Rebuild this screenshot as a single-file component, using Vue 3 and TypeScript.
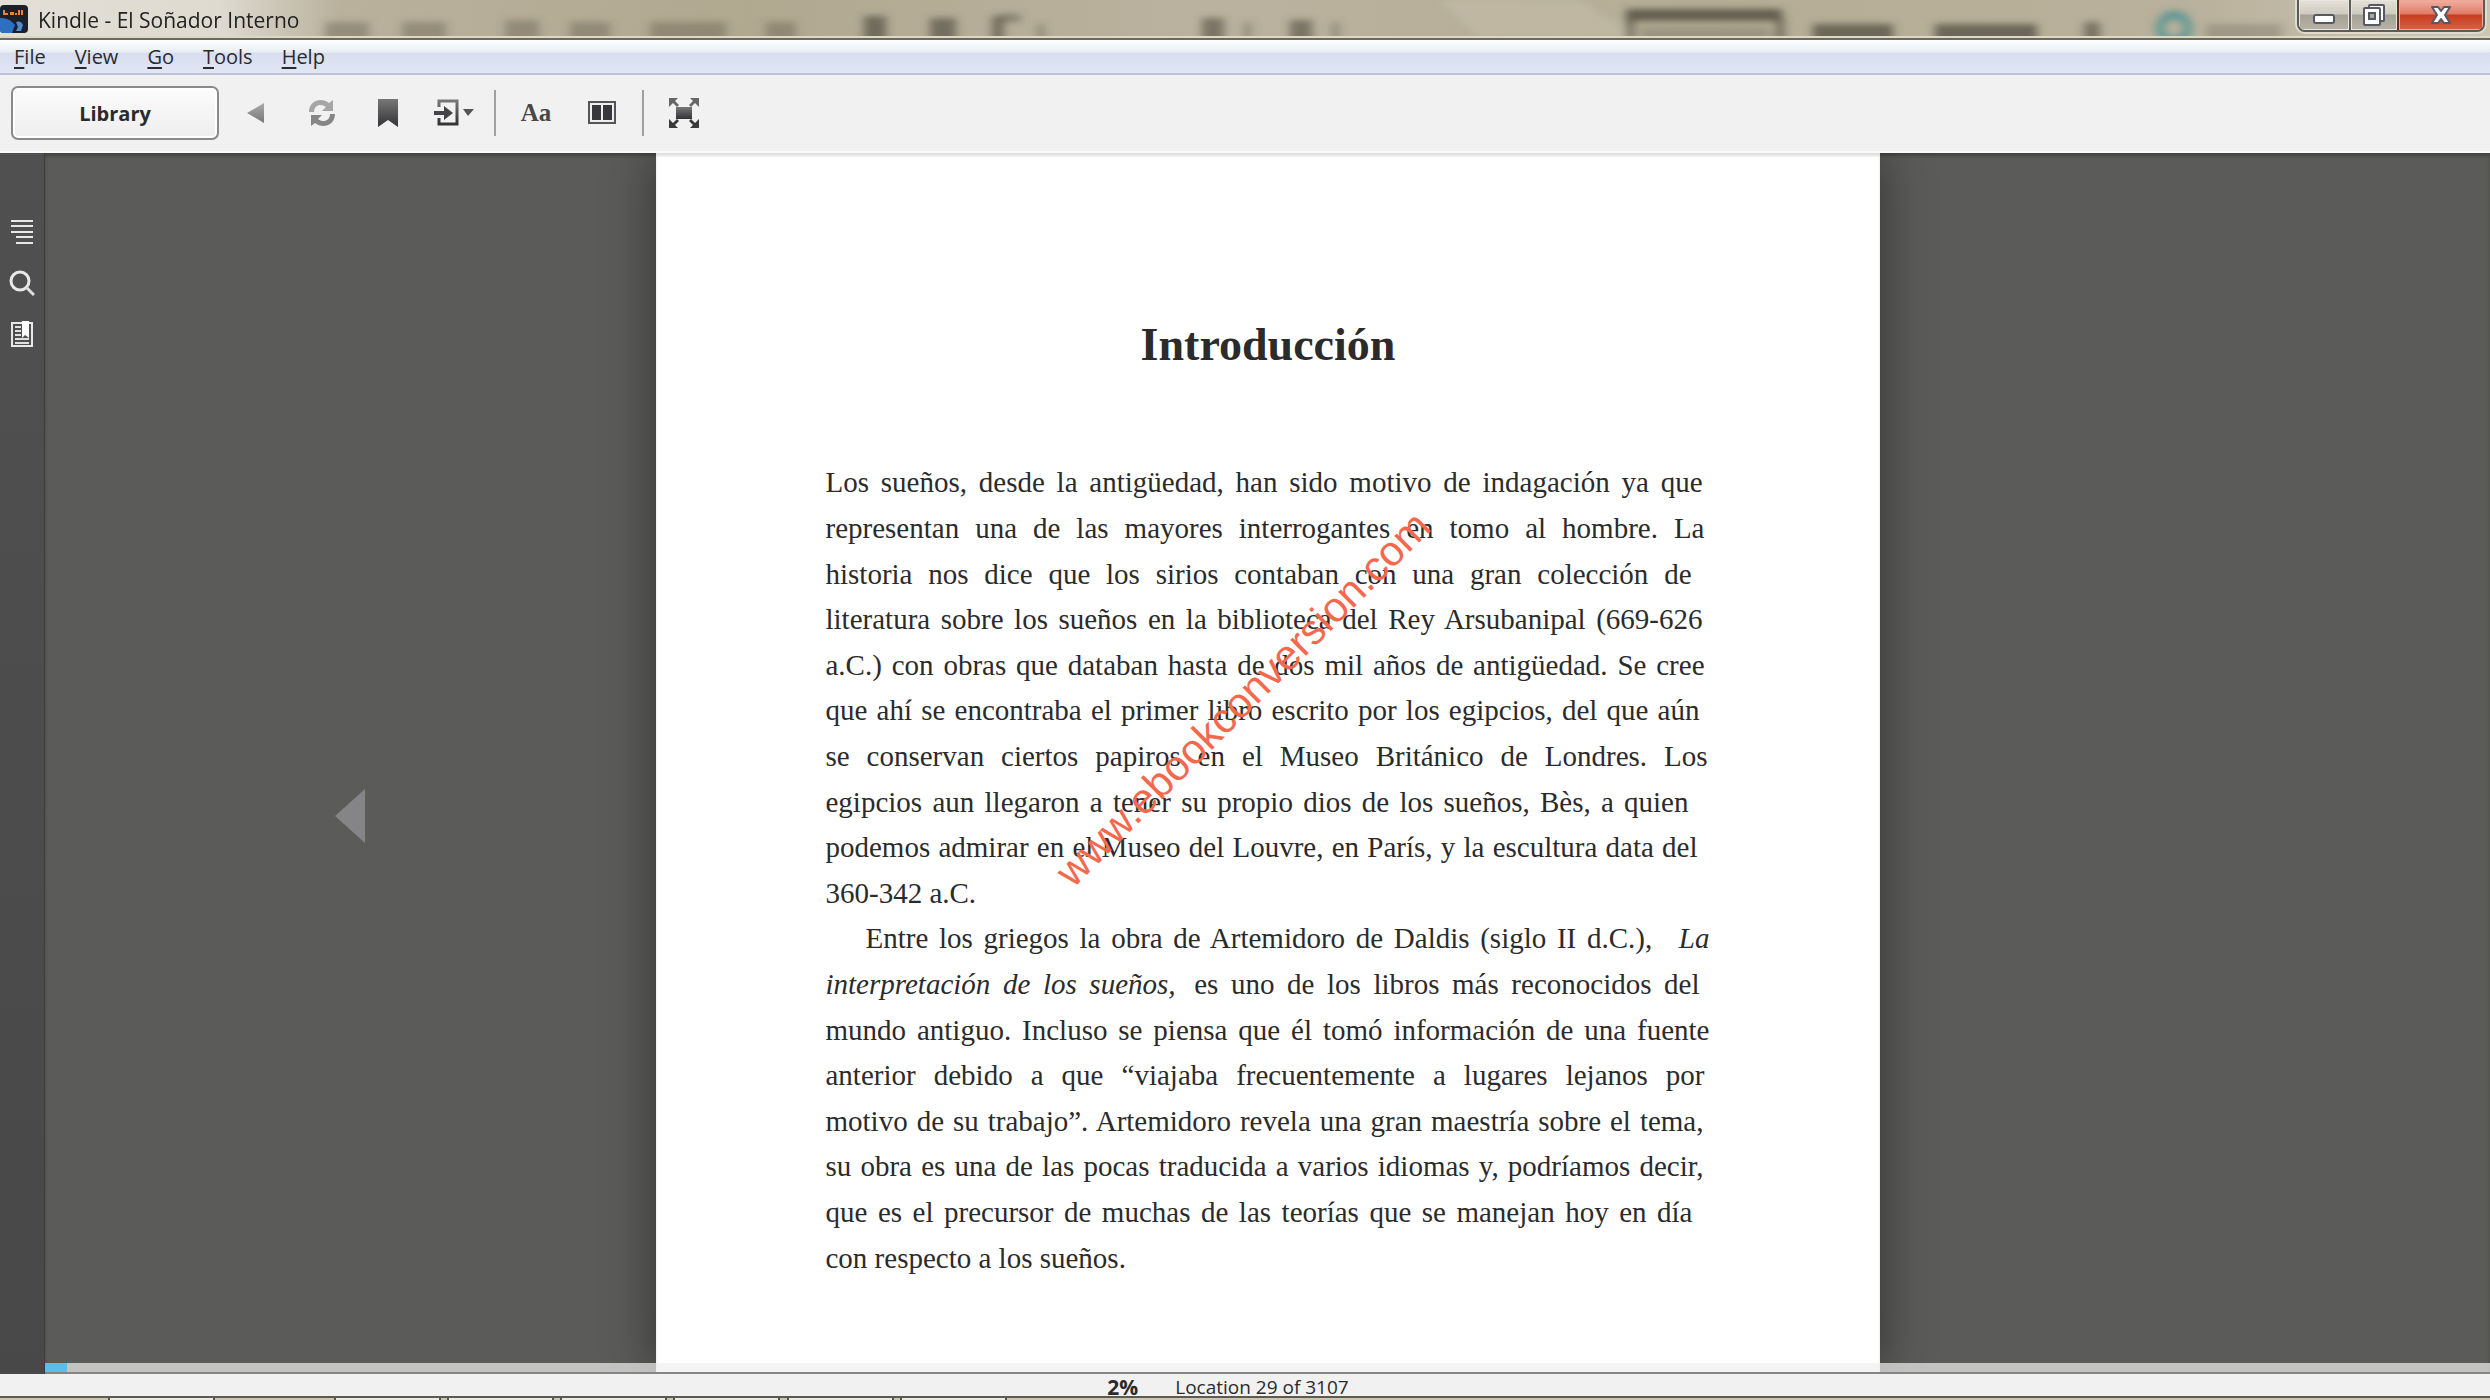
<script setup lang="ts">
interface Line {
  text: string
  slack: number
  before?: string
  italic?: string
}

const menus: string[] = ['File', 'View', 'Go', 'Tools', 'Help']

const first: Line[] = [
  { text: 'Los sueños, desde la antigüedad, han sido motivo de indagación ya que', slack: 8 },
  { text: 'representan una de las mayores interrogantes en tomo al hombre. La', slack: 6 },
  { text: 'historia nos dice que los sirios contaban con una gran colección de', slack: 19 },
  { text: 'literatura sobre los sueños en la biblioteca del Rey Arsubanipal (669-626', slack: 8 },
  { text: 'a.C.) con obras que databan hasta de dos mil años de antigüedad. Se cree', slack: 6 },
  { text: 'que ahí se encontraba el primer libro escrito por los egipcios, del que aún', slack: 11 },
  { text: 'se conservan ciertos papiros en el Museo Británico de Londres. Los', slack: 3 },
  { text: 'egipcios aun llegaron a tener su propio dios de los sueños, Bès, a quien', slack: 22 },
  { text: 'podemos admirar en el Museo del Louvre, en París, y la escultura data del', slack: 13 },
  { text: '360-342 a.C.', slack: 0 },
]

const second: Line[] = [
  { before: 'Entre los griegos la obra de Artemidoro de Daldis (siglo II d.C.), ', italic: 'La', text: '', slack: 1 },
  { italic: 'interpretación de los sueños,', text: ' es uno de los libros más reconocidos del', slack: 11 },
  { text: 'mundo antiguo. Incluso se piensa que él tomó información de una fuente', slack: 1 },
  { text: 'anterior debido a que “viajaba frecuentemente a lugares lejanos por', slack: 6 },
  { text: 'motivo de su trabajo”. Artemidoro revela una gran maestría sobre el tema,', slack: 7 },
  { text: 'su obra es una de las pocas traducida a varios idiomas y, podríamos decir,', slack: 7 },
  { text: 'que es el precursor de muchas de las teorías que se manejan hoy en día', slack: 18 },
  { text: 'con respecto a los sueños.', slack: 0 },
]

const smudges: number[][] = [
  [325, 22, 44, 24, 0.4], [402, 22, 44, 24, 0.4], [505, 20, 34, 24, 0.4], [570, 22, 40, 24, 0.4],
  [650, 22, 76, 24, 0.4], [766, 22, 30, 24, 0.4], [864, 16, 22, 30, 0.8], [930, 18, 26, 28, 0.75],
  [992, 16, 12, 30, 0.75], [1000, 14, 20, 8, 0.55], [1038, 24, 6, 20, 0.5], [1202, 18, 22, 28, 0.7],
  [1244, 22, 7, 22, 0.45], [1290, 20, 22, 26, 0.7], [1332, 22, 7, 22, 0.45], [1626, 9, 156, 12, 0.95],
  [1626, 18, 8, 28, 0.8], [1776, 18, 8, 28, 0.8], [1640, 27, 130, 18, 0.3], [1813, 24, 80, 22, 0.85],
  [1935, 24, 102, 22, 0.85], [2084, 22, 16, 24, 0.7], [2206, 24, 76, 20, 0.3],
]

const tasks: number[] = [109, 335, 448, 561, 674, 788, 901]
const read = 2
</script>

<template>
  <div class="window">
    <header class="titlebar">
      <svg class="glass" aria-hidden="true">
        <defs>
          <filter id="soft" x="-5%" y="-50%" width="110%" height="200%"><feGaussianBlur stdDeviation="5 3" /></filter>
        </defs>
        <g filter="url(#soft)">
          <path d="M1440 0h140l60 38h-160z" fill="#cbc3b0" opacity=".4" />
          <rect v-for="(s, i) in smudges" :key="i" :x="s[0]" :y="s[1]" :width="s[2]" :height="s[3]" :opacity="s[4]" fill="#5f5a4c" />
          <ellipse cx="2174" cy="28" rx="14" ry="13" fill="none" stroke="#629994" stroke-width="9" />
        </g>
      </svg>
      <svg class="app-icon" viewBox="0 0 28 28" aria-hidden="true">
        <rect width="28" height="28" rx="4" fill="#1d2028" />
        <path d="M0 13q8 0 12 4l3 3-3 8H3q-3 0-3-3z" fill="#2f6fc0" />
        <path d="M16 17q5-2 7 3l-2 6h-5l2-4z" fill="#4b8cd4" />
        <path d="M4 5v5M4 9h4M11 7v3M13 7v3M16 8v2M19 5v5M22 5v5" stroke="#e9862d" stroke-width="2" />
      </svg>
      <h1 class="caption">Kindle - El Soñador Interno</h1>
      <div class="controls">
        <button type="button" class="ctl" aria-label="Minimize">
          <svg width="22" height="28" viewBox="0 0 22 28"><rect x="1" y="15" width="20" height="8" rx="2" fill="#fff" stroke="#565866" stroke-width="2" /></svg>
        </button>
        <button type="button" class="ctl mid" aria-label="Restore">
          <svg width="24" height="28" viewBox="0 0 24 28"><g fill="#fff" stroke="#565866" stroke-width="2"><rect x="7" y="5" width="15" height="16" rx="1" /><rect x="2" y="8" width="16" height="17" rx="1" /><rect x="7" y="13" width="6" height="6" fill="#aaa698" /></g></svg>
        </button>
        <button type="button" class="ctl close" aria-label="Close">
          <svg width="22" height="28" viewBox="0 0 22 28"><path d="M2 7h6l3 4 3-4h6l-5 8 5 8h-6l-3-4-3 4H2l5-8z" fill="#fff" stroke="#565866" stroke-width="2" stroke-linejoin="round" /></svg>
        </button>
      </div>
    </header>

    <nav class="menubar">
      <button v-for="m in menus" :key="m" type="button"><u>{{ m[0] }}</u>{{ m.slice(1) }}</button>
    </nav>

    <div class="toolbar">
      <button type="button" class="library">Library</button>
      <svg width="0" height="0" class="defs" aria-hidden="true">
        <linearGradient id="ink" x1="0" y1="0" x2="0" y2="1"><stop offset="0" stop-color="#777" /><stop offset="1" stop-color="#333336" /></linearGradient>
        <linearGradient id="grey" x1="0" y1="0" x2="0" y2="1"><stop offset="0" stop-color="#aaa" /><stop offset="1" stop-color="#777" /></linearGradient>
      </svg>
      <button type="button" class="tool" aria-label="Back">
        <svg width="18" height="20" viewBox="0 0 18 20"><path d="M0 10 17 0v20z" fill="url(#grey)" /></svg>
      </button>
      <button type="button" class="tool" aria-label="Sync">
        <svg width="28" height="28" viewBox="0 0 28 28"><path d="M1 13C1 1 14-2 21 4l4-3v11H14l4-4C13 4 6 6 6 13z" fill="#a6a6a6" /><path d="M27 15C27 27 14 30 7 24l-4 3V16h11l-4 4c5 4 12 2 12-5z" fill="#868686" /></svg>
      </button>
      <button type="button" class="tool" aria-label="Bookmark">
        <svg width="22" height="28" viewBox="0 0 22 28"><path d="M1 0h20v28l-10-7-10 7z" fill="url(#ink)" /></svg>
      </button>
      <button type="button" class="tool" aria-label="Go to">
        <svg width="40" height="28" viewBox="0 0 40 28"><path d="M5 8V2h18v23H5v-6" fill="none" stroke="url(#ink)" stroke-width="3" /><path d="M0 12h10V7l9 7-9 7v-5H0z" fill="#454548" /><path d="M29 10h11l-6 7z" fill="#555" /></svg>
      </button>
      <i class="rule"></i>
      <button type="button" class="tool aa" aria-label="Display options">Aa</button>
      <button type="button" class="tool" aria-label="Columns">
        <svg width="28" height="24" viewBox="0 0 28 24"><rect x="1" y="1" width="26" height="21" fill="#eee" stroke="#555" stroke-width="2" /><path d="M4 4h9v15H4zM15 4h9v15h-9z" fill="#38383b" /></svg>
      </button>
      <i class="rule"></i>
      <button type="button" class="tool" aria-label="Full screen">
        <svg width="30" height="30" viewBox="0 0 30 30"><rect x="7" y="9" width="16" height="12" fill="url(#ink)" /><g fill="#666"><path d="M0 0h9L6 3l4 4-2 2-4-4-4 4z" /><path d="M30 0h-9l3 3-4 4 2 2 4-4 4 4z" /></g><g fill="#3a3a3c"><path d="M0 30h9l-3-3 4-4-2-2-4 4-4-4z" /><path d="M30 30h-9l3-3-4-4 2-2 4 4 4-4z" /></g></svg>
      </button>
    </div>

    <main class="workspace">
      <aside class="sidebar">
        <button type="button" aria-label="Contents">
          <svg width="24" height="26" viewBox="0 0 24 26"><path d="M1 2h22M1 7h22M1 13h22M6 18h17M6 24h17" stroke="#e8e8e8" stroke-width="2" /></svg>
        </button>
        <button type="button" aria-label="Search">
          <svg width="26" height="26" viewBox="0 0 26 26"><circle cx="11" cy="11" r="9" fill="none" stroke="#e8e8e8" stroke-width="3" /><path d="m17 17 8 8" stroke="#ddd" stroke-width="3" /></svg>
        </button>
        <button type="button" aria-label="Notebook">
          <svg width="24" height="26" viewBox="0 0 24 26"><path d="M2 2h20v23H2z" fill="none" stroke="#e8e8e8" stroke-width="2" /><path d="M5 6h6M5 10h6M5 14h6M5 18h14M5 22h14" stroke="#e0e0e0" stroke-width="2" /><path d="M12 0h7v17l-4-3-3 3z" fill="#fff" /></svg>
        </button>
      </aside>

      <section class="reader">
        <button type="button" class="turn" aria-label="Previous page">
          <svg width="30" height="54" viewBox="0 0 30 54"><path d="M0 27 30 0v54z" fill="#858587" /></svg>
        </button>
        <article class="page">
          <h2>Introducción</h2>
          <div class="body">
            <p class="ten">
              <span v-for="(l, i) in first" :key="i" :style="{ marginRight: l.slack + 'px' }">{{ l.text }}</span>
            </p>
            <p class="eight">
              <span v-for="(l, i) in second" :key="i" :style="{ marginRight: l.slack + 'px' }">{{ l.before }}<em v-if="l.italic">{{ l.italic }}</em>{{ l.text }}</span>
            </p>
          </div>
          <div class="watermark">www.ebookconversion.com</div>
        </article>
        <div class="progress" role="progressbar" aria-label="Reading progress" :aria-valuenow="read">
          <div class="done"></div>
        </div>
      </section>
    </main>

    <footer class="status"><b>{{ read }}%</b><span>Location 29 of 3107</span></footer>
    <svg class="taskbar" aria-hidden="true">
      <rect v-for="x in tasks" :key="x" :x="x" y="1" width="105" height="6" fill="#eceae2" stroke="#55544a" stroke-width="2" />
      <rect width="100%" height="2" fill="#5c5b52" />
    </svg>
  </div>
</template>

<style>
body {
  margin: 0;
}
</style>

<style scoped>
.window {
  display: flex;
  flex-direction: column;
  min-height: 100vh;
  overflow: hidden;
  background: #f1f1f1;
  color: #2b2b2b;
  font-family: "Open Sans", "Noto Sans", sans-serif;
  font-size: 19px;
}
button {
  margin: 0;
  padding: 0;
  border: 0;
  background: none;
  color: inherit;
  font: inherit;
}
svg {
  display: block;
}
.titlebar {
  position: relative;
  display: flex;
  align-items: flex-start;
  height: 40px;
  box-sizing: border-box;
  border-bottom: 2px solid #6b6a5e;
  box-shadow: inset 0 -2px #dcd8c6;
  background: linear-gradient(90deg, #e2dfd6 0, #dedad0 220px, #b9b19c 340px, #b0a88f 30%, #bab29e 48%, #b5ad95 70%, #b9b19b 88%, #cdc6b5 100%);
}
.glass {
  position: absolute;
  top: 0;
  left: 0;
  width: 100%;
  height: 36px;
}
.app-icon {
  position: relative;
  width: 28px;
  height: 28px;
  margin-top: 5px;
}
.caption {
  position: relative;
  flex: 1;
  margin: 0 0 0 10px;
  font-size: 21px;
  font-weight: 400;
  line-height: 40px;
  color: #222;
}
.controls {
  position: relative;
  display: flex;
  height: 32px;
  box-sizing: border-box;
  margin-right: 5px;
  border: 2px solid #5d5b58;
  border-top: 0;
  border-radius: 0 0 8px 8px;
  box-shadow: 0 0 0 2px #dfdbcf;
  overflow: hidden;
}
.ctl {
  display: flex;
  justify-content: center;
  width: 50px;
  box-shadow: inset 0 0 0 1px #e8e6de;
  background: linear-gradient(#e4e1d8 0, #cfcbbf 14px, #a5a195 15px, #b7b3a8 100%);
}
.mid {
  width: 48px;
  border-left: 2px solid #5d5b58;
}
.close {
  width: 86px;
  border-left: 2px solid #6b2a20;
  box-shadow: inset 0 0 0 1px #f0a898;
  background: linear-gradient(#f0b0a0 0, #e07a66 14px, #c83c20 15px, #d86244 100%);
}
.menubar {
  display: flex;
  gap: 29px;
  height: 33px;
  padding-left: 14px;
  border-bottom: 2px solid #bcc3d9;
  background: linear-gradient(#fff 0, #e7eef4 12px, #d8deee 13px, #e0e6f4 100%);
  font-size: 20px;
}
.menubar button {
  line-height: 33px;
}
.menubar u {
  text-underline-offset: 3px;
}
.toolbar {
  display: flex;
  align-items: center;
  height: 76px;
  padding-left: 11px;
  border-bottom: 2px solid #fafafa;
}
.defs {
  position: absolute;
}
.library {
  width: 208px;
  height: 54px;
  margin-right: 4px;
  border: 2px solid #8a8a8a;
  border-radius: 7px;
  box-shadow: inset 0 0 0 2px #fff;
  background: linear-gradient(#fcfcfc, #eee);
  font-size: 20px;
  font-weight: 700;
}
.tool {
  display: flex;
  align-items: center;
  justify-content: center;
  width: 66px;
  height: 54px;
}
.aa {
  color: #48484a;
  font-family: "Liberation Serif", serif;
  font-size: 25px;
  font-weight: 700;
}
.rule {
  width: 2px;
  height: 46px;
  margin: 0 7px;
  background: #a0a0a0;
}
.workspace {
  flex: 1;
  display: flex;
  background: #5b5b59;
}
.sidebar {
  width: 44px;
  padding-top: 53px;
  border-right: 1px solid #3c3c3b;
  background: linear-gradient(#505050, #484848);
}
.sidebar button {
  display: flex;
  align-items: center;
  justify-content: center;
  width: 43px;
  height: 51px;
}
.reader {
  position: relative;
  flex: 1;
  display: grid;
  grid-template-columns: 1fr minmax(auto, 1224px) 1fr;
  overflow: hidden;
  border-bottom: 2px solid #868686;
  box-shadow: inset 0 3px 3px #454543;
}
.turn {
  justify-self: center;
  align-self: center;
  margin-top: 106px;
}
.page {
  position: relative;
  display: flex;
  flex-direction: column;
  box-sizing: border-box;
  padding: 165px 169px 91px 170px;
  background: #fff;
  box-shadow: 0 0 48px rgba(0, 0, 0, 0.45), inset 0 3px 3px #ddd;
  font-family: "Liberation Serif", serif;
}
h2 {
  margin: 0 0 88px;
  font-size: 46px;
  line-height: 54px;
  text-align: center;
}
.body {
  flex: 1;
  display: flex;
  flex-direction: column;
  font-size: 29px;
}
p {
  display: grid;
  grid-auto-rows: 1fr;
  align-items: center;
  margin: 0;
  white-space: nowrap;
}
.ten {
  flex: 10 1 0;
}
.eight {
  flex: 8 1 0;
}
p span {
  text-align: justify;
  text-align-last: justify;
}
p span:last-child {
  text-align-last: left;
}
.eight span:first-child {
  padding-left: 40px;
}
.eight span:first-child em {
  margin-left: 16px;
}
.eight span:nth-child(2) em {
  margin-right: 6px;
}
.watermark {
  position: absolute;
  top: 546px;
  left: 48%;
  transform: translate(-50%, -50%) rotate(-45deg);
  color: #f4694e;
  font-family: "Liberation Sans", sans-serif;
  font-size: 42px;
  line-height: 46px;
}
.progress {
  position: absolute;
  bottom: 0;
  left: 0;
  width: 100%;
  height: 9px;
  background: rgba(240, 240, 240, 0.7);
}
.done {
  width: 22px;
  height: 100%;
  background: #5bbdea;
}
.status {
  display: flex;
  justify-content: center;
  gap: 37px;
  height: 22px;
  padding-right: 34px;
  line-height: 26px;
}
.status b {
  font-size: 21px;
}
.taskbar {
  width: 100%;
  height: 4px;
  background: #cdc6b0;
}
</style>
